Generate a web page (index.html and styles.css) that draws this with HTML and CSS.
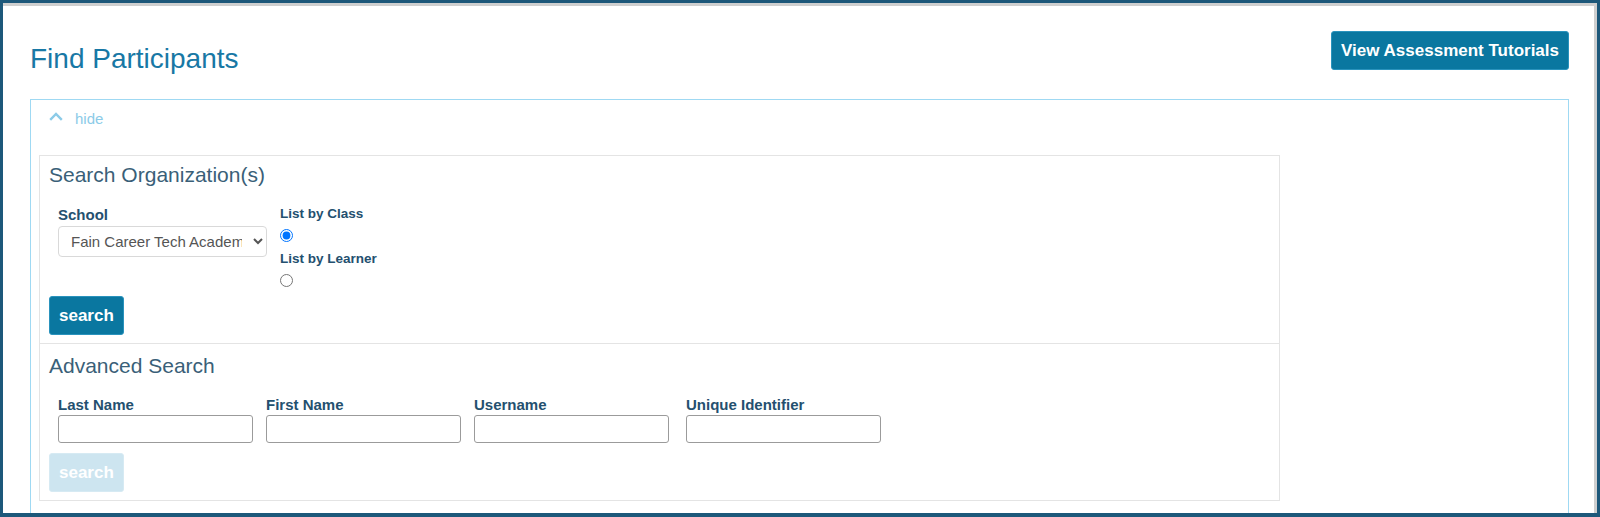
FILE: index.html
```html
<!DOCTYPE html>
<html lang="en">

<head>
  <meta charset="UTF-8" />
  <title>Find Participants</title>
  <link rel="stylesheet" href="styles.css">
</head>

<body>
  <div class="frame">
    <div class="page">
      <header class="page-header">
        <h1 class="page-title">Find Participants</h1>
        <button class="btn btn-primary tutorials-btn">View Assessment Tutorials</button>
      </header>

      <div class="filter-panel">
        <a class="toggle-link" href="#">
          <svg width="14" height="9" viewBox="0 0 14 9">
            <polyline points="1.2,7.8 7,2 12.8,7.8" fill="none" stroke="currentColor" stroke-width="2.4" />
          </svg>
          <span>hide</span>
        </a>

        <div class="search-box">
          <section class="search-section">
            <h2>Search Organization(s)</h2>
            <div class="org-row">
              <div class="field">
                <label for="school">School</label>
                <select id="school" class="school-select">
                  <option>Fain Career Tech Academy</option>
                </select>
              </div>
              <div class="list-options">
                <label for="by-class">List by Class</label>
                <input type="radio" name="list-by" id="by-class" checked>
                <label for="by-learner">List by Learner</label>
                <input type="radio" name="list-by" id="by-learner">
              </div>
            </div>
            <button class="btn btn-primary search-btn">search</button>
          </section>

          <section class="search-section advanced">
            <h2>Advanced Search</h2>
            <div class="name-row">
              <div class="field">
                <label for="last-name">Last Name</label>
                <input type="text" id="last-name">
              </div>
              <div class="field">
                <label for="first-name">First Name</label>
                <input type="text" id="first-name">
              </div>
              <div class="field">
                <label for="username">Username</label>
                <input type="text" id="username">
              </div>
              <div class="field field-wide-gap">
                <label for="unique-id">Unique Identifier</label>
                <input type="text" id="unique-id">
              </div>
            </div>
            <button class="btn btn-primary search-btn" disabled>search</button>
          </section>
        </div>
      </div>
    </div>
  </div>
</body>

</html>
```

FILE: styles.css
```css
* {
  box-sizing: border-box;
}

body {
  margin: 0;
  font-family: "Liberation Sans", Arial, sans-serif;
  background: #fff;
}

/* moldura escura da captura */
.frame {
  height: 517px;
  border: 3px solid #1d587a;
  border-bottom-width: 4px;
  box-shadow: inset -3px 3px 0 #cfcfcf;
  overflow: hidden;
}

.page {
  padding: 28px 28px 0 27px;
}

.page-header {
  display: flex;
  justify-content: space-between;
  align-items: flex-start;
}

.page-title {
  margin: 0;
  padding-top: 12px;
  font-size: 28px;
  line-height: 32px;
  font-weight: normal;
  color: #1878a5;
}

.btn {
  font-family: inherit;
  font-weight: bold;
  font-size: 17px;
  height: 39px;
  border-radius: 3px;
  cursor: pointer;
}

.btn-primary {
  background-color: #0a77a0;
  border: 1px solid #2a93bd;
  color: white;
}

.btn-primary:disabled {
  background-color: #cde5f0;
  border-color: #d6eaf3;
  cursor: default;
}

.tutorials-btn {
  padding: 0 9px;
}

.filter-panel {
  margin-top: 24px;
  border: 1px solid #9fd9f3;
  padding: 8px 8px 30px;
}

.toggle-link {
  display: flex;
  align-items: center;
  gap: 12px;
  margin-left: 10px;
  height: 20px;
  font-size: 15px;
  color: #8ccbe8;
  text-decoration: none;
}

.toggle-link svg {
  margin-top: -4px;
}

.search-box {
  margin-top: 27px;
  width: 1241px;
  border: 1px solid #e4e4e4;
}

.search-section {
  padding: 7px 9px 8px;
}

.search-section.advanced {
  border-top: 1px solid #e4e4e4;
  padding-top: 10px;
}

.search-section h2 {
  margin: 0;
  font-size: 21px;
  line-height: 24px;
  font-weight: normal;
  color: #3a5f78;
}

.field label,
.list-options label {
  display: block;
  font-weight: bold;
  color: #24506f;
}

.field label {
  font-size: 15px;
  line-height: 18px;
}

.org-row {
  display: flex;
  gap: 13px;
  margin: 19px 0 0 9px;
}

.school-select {
  margin-top: 2px;
  width: 209px;
  height: 31px;
  padding: 0 8px;
  border: 1px solid #d9d9d9;
  border-radius: 4px;
  background: #fff;
  font-family: inherit;
  font-size: 15px;
  color: #555;
}

.list-options label {
  font-size: 13.5px;
  line-height: 16px;
}

.list-options input[type="radio"] {
  display: block;
  margin: 7px 0 9px;
  width: 13px;
  height: 13px;
}

.list-options input[type="radio"]:last-child {
  margin-bottom: 0;
}

.search-btn {
  margin-top: 9px;
  padding: 0 9px;
}

.name-row {
  display: flex;
  gap: 13px;
  margin: 18px 0 0 9px;
}

.field-wide-gap {
  margin-left: 4px;
}

.name-row input {
  display: block;
  margin-top: 1px;
  width: 195px;
  height: 28px;
  border: 1px solid #9b9b9b;
  border-radius: 3px;
  font-family: inherit;
  font-size: 14px;
}

.advanced .search-btn {
  margin-top: 10px;
}
```
